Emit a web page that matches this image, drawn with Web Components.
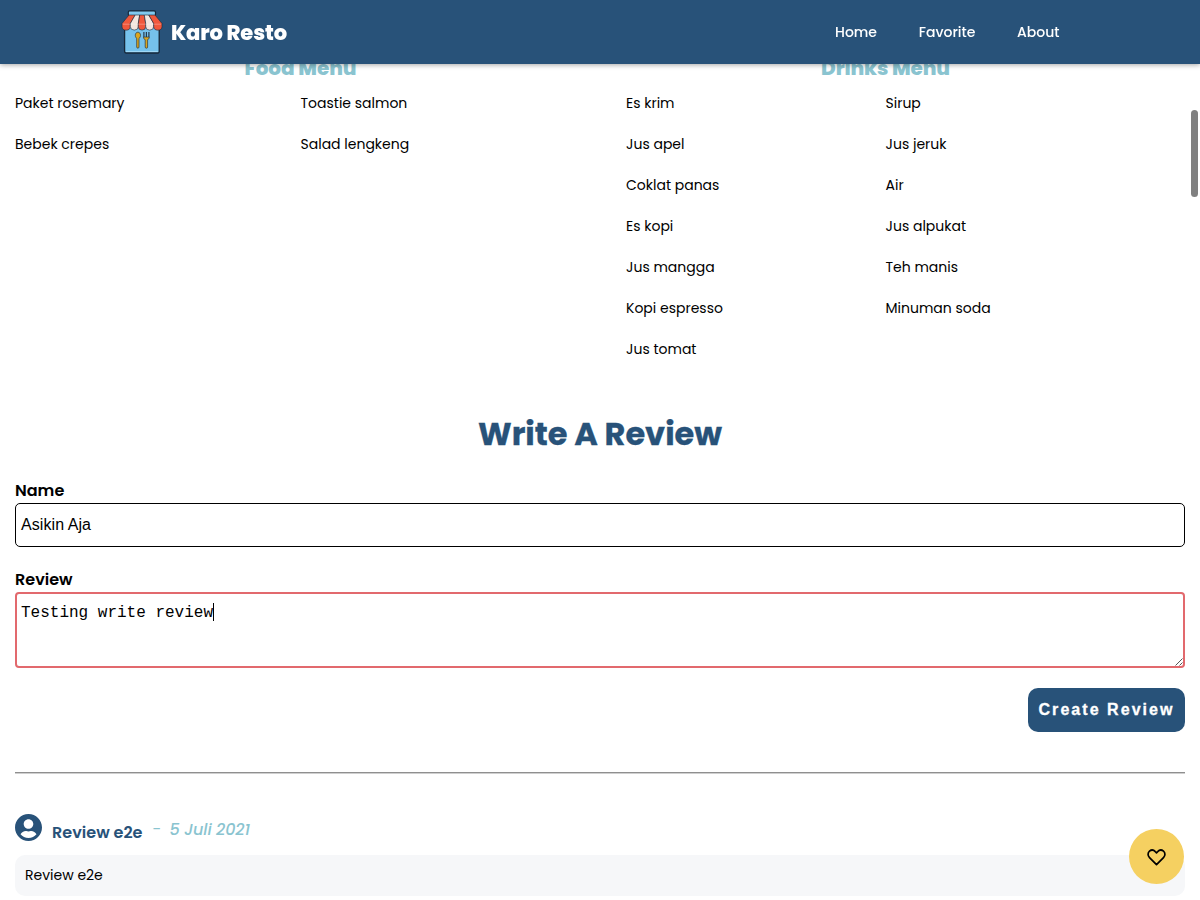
<!DOCTYPE html>
<html lang="en">
<head>
<meta charset="utf-8">
<title>Karo Resto</title>
<style>
html,body{margin:0;height:900px;overflow:hidden;background:#fff}
body{font-family:Poppins,Inter,"Open Sans",sans-serif;color:#000;--navy:#285279;--teal:#8ac4d0}
</style>
</head>
<body>
<resto-app></resto-app>
<script>
const define = (name, html, setup) => customElements.define(name, class extends HTMLElement {
  connectedCallback() {
    if (this.shadowRoot) return;
    const root = this.attachShadow({mode: 'open'});
    const t = document.createElement('template');
    t.innerHTML = html;
    if (setup) setup(this, root, t);
    root.appendChild(t.content.cloneNode(true));
  }
});

/* A line of text tracked so that it takes up the given width. */
customElements.define('fit-text', class extends HTMLElement {
  connectedCallback() {
    if (this.shadowRoot) return;
    const root = this.attachShadow({mode: 'open'});
    root.innerHTML = '<style>:host{display:inline-block;white-space:nowrap}</style><slot></slot>';
    requestAnimationFrame(() => this.fit());
    this.fit();
  }
  fit() {
    const w = parseFloat(this.getAttribute('w'));
    this.style.width = 'auto';
    this.style.letterSpacing = '0px';
    const natural = this.getBoundingClientRect().width;
    const n = this.textContent.length;
    if (natural && n > 1) this.style.letterSpacing = ((w - natural) / (n - 1)).toFixed(4) + 'px';
    this.style.width = w + 'px';
  }
});

define('resto-logo', `
<style>:host{display:block;width:42px;height:46px}svg{display:block}</style>
<svg width="42" height="46" viewBox="0 0 42 46">
  <path d="M3.600 15h34.600v27.600a1.400 1.400 0 0 1-1.400 1.400H5a1.400 1.400 0 0 1-1.400-1.400z" fill="#76c2ec" stroke="#17283a" stroke-width="1.300"/>
  <path d="M5 42.500h31.800" stroke="#a5daf6" stroke-width=".9"/>
  <rect x="7.300" y="1.900" width="27.200" height="5" rx="1.400" fill="#80c9ef" stroke="#17283a" stroke-width="1.200"/>
  <g stroke="#17283a" stroke-opacity=".75" stroke-width=".8">
    <path d="M8 6h6.200L9.300 14.500v3a4.100 3.600 0 0 1-8.300 0v-3z" fill="#f0583c"/>
    <path d="M14.200 6h4.500l-1.400 8.500v3a4 3.600 0 0 1-8 0v-3z" fill="#f3e6df"/>
    <path d="M18.700 6h4.600l1.400 8.500v3a3.700 3.600 0 0 1-7.400 0v-3z" fill="#f0583c"/>
    <path d="M23.300 6h4.500l4.900 8.500v3a4 3.600 0 0 1-8 0v-3z" fill="#f3e6df"/>
    <path d="M27.800 6H34l7 8.500v3a4.100 3.600 0 0 1-8.300 0v-3z" fill="#f0583c"/>
  </g>
  <path d="M1.800 15.200h38.300" stroke="#fff" stroke-opacity=".3" stroke-width="1"/>
  <g stroke="#283742" stroke-width=".7" fill="#dba51e">
    <path d="M16.900 23.200c1.700 0 2.600 1.400 2.600 3.100 0 1.500-.7 2.600-1.500 3v8.700a1.150 1.150 0 0 1-2.300 0v-8.700c-.8-.4-1.400-1.500-1.400-3 0-1.700.9-3.100 2.600-3.100z"/>
    <path d="M22.500 28h5.800c0 1.700-.8 2.300-1.700 2.600V38a1.200 1.200 0 0 1-2.400 0v-7.400c-1-.3-1.700-.9-1.700-2.600z"/>
  </g>
  <path d="M22.900 23v5M25.400 23v5M27.900 23v5" stroke="#263b4d" stroke-width="1.200"/>
</svg>`);

define('app-bar', `
<style>
:host{display:flex;position:fixed;inset:0 0 auto 0;height:64px;box-sizing:border-box;padding:0 140.500px 0 121px;align-items:center;justify-content:space-between;background:var(--navy);color:#fff;box-shadow:0 1px 5px rgba(0,0,0,.35);z-index:5}
.brand{display:flex;align-items:center;gap:8px;font-weight:800;font-size:21px;line-height:30px}
.brand fit-text{margin-top:1px}
nav{display:flex;gap:41.700px;font-size:14px;font-weight:500;line-height:21px}
</style>
<div class="brand"><resto-logo></resto-logo><fit-text w="116">Karo Resto</fit-text></div>
<nav><span>Home</span><span>Favorite</span><span>About</span></nav>`);

define('menu-list', `
<style>
:host{display:block}
h2{margin:-1px 0 12px;height:26px;line-height:26px;text-align:center;color:var(--teal);font-size:20px;font-weight:800}
.items{display:grid;grid-template-columns:1fr 1fr;grid-auto-rows:41px;font-size:14px;line-height:21px}
</style>
<h2></h2><div class="items"></div>`, (host, root, t) => {
  t.content.querySelector('h2').innerHTML = `<fit-text w="${host.getAttribute('w')}">${host.getAttribute('title-text')}</fit-text>`;
  t.content.querySelector('.items').innerHTML = host.getAttribute('items').split(',').map(s => `<div>${s}</div>`).join('');
});

define('form-field', `
<style>
:host{display:block}
.label{height:24px;line-height:26px;font-size:16px;font-weight:600}
.box{position:relative;box-sizing:border-box;height:44px;margin-top:1px;border:1px solid #000;border-radius:5px;padding:0 5px;font:16px/42px "Liberation Sans",Arial,sans-serif}
:host([multiline]) .box{height:76px;border:2px solid #e2696d;border-radius:4px;padding:9px 4px;font:16px/20px "Liberation Mono","Courier New",monospace}
.value{display:inline-block;height:18px}
:host(:not([multiline])) svg{display:none}
:host([multiline]) .value{border-right:1px solid #000}
svg{position:absolute;right:0;bottom:0}
</style>
<div class="label"><slot name="label"></slot></div>
<div class="box" role="textbox"><span class="value"><slot></slot></span>
<svg width="8" height="8"><path d="M.5 7.500l7-7M4.500 7.500l3-3" stroke="#555" fill="none"/></svg></div>`);

define('primary-button', `
<style>
:host{display:block}
button{display:block;box-sizing:border-box;width:157px;height:44px;margin:0 0 0 auto;padding:0 2px 1px 0;border:0;border-radius:10px;background:var(--navy);color:#fff;font:bold 16px "Liberation Sans",Arial,sans-serif;-webkit-text-stroke:.3px #fff}
</style>
<button><slot></slot></button>`);

define('review-card', `
<style>
:host{display:block}
header{display:flex;height:41px}
.avatar{display:block;width:27px;height:27px}
.name{margin:7px 0 0 10px;font-size:16px;line-height:24px;font-weight:600;color:var(--navy)}
.dash,.date{margin:4px 0 0 10px;font-size:16px;line-height:24px;color:var(--teal)}
.date{font-style:italic;font-weight:500}
.text{box-sizing:border-box;height:41px;padding:10px;border-radius:10px;background:#f6f7f9;font-size:14px;line-height:21px}
</style>
<header>
<svg class="avatar" viewBox="0 8 496 496"><path fill="#285279" d="M248 8C111 8 0 119 0 256s111 248 248 248 248-111 248-248S385 8 248 8zm0 96c48.600 0 88 39.400 88 88s-39.400 88-88 88-88-39.400-88-88 39.400-88 88-88zm0 344c-58.700 0-111.300-26.600-146.500-68.200 18.800-35.400 55.600-59.800 98.500-59.800 2.400 0 4.800.4 7.100 1.100 13 4.200 26.600 6.900 40.900 6.900 14.300 0 28-2.700 40.900-6.900 2.300-.7 4.700-1.100 7.100-1.100 42.900 0 79.700 24.400 98.500 59.800C359.300 421.400 306.700 448 248 448z"/></svg>
<div class="name"><slot name="name"></slot></div><div class="dash"><fit-text w="7">-</fit-text></div><div class="date"><slot name="date"></slot></div>
</header>
<div class="text"><slot></slot></div>`);

define('like-button', `
<style>
:host{position:fixed;right:16px;top:829px;width:55px;height:55px;border-radius:50%;background:#f5d061;display:flex;align-items:center;justify-content:center;z-index:3}
svg{margin-top:1px}
</style>
<svg width="19" height="17" viewBox="0.500 0.500 19 17"><path d="M10 16.200 3 9.200C1.100 7.300 1.100 4.200 3 2.600c1.900-1.500 4.300-1.100 5.800.5L10 4.300l1.200-1.200c1.500-1.600 3.900-2 5.800-.5 1.900 1.600 1.900 4.700 0 6.600z" fill="none" stroke="#000" stroke-width="1.700" stroke-linejoin="round"/></svg>`);

define('scroll-thumb', `<style>:host{position:fixed;right:2px;top:110px;width:7px;height:87px;border-radius:4px;background:#808080;z-index:4}</style>`);

define('resto-app', `
<style>
:host{display:block}
main{display:flex;flex-direction:column;padding:56px 15px 0}
.menus{display:grid;grid-template-columns:571px 519px;gap:40px;height:324px}
h1{margin:30px 0 0;height:48px;line-height:48px;text-align:center;color:var(--navy);font-size:32px;font-weight:700;-webkit-text-stroke:.3px var(--navy)}
form-field{margin-top:20px}
primary-button{margin-top:20px}
hr{width:100%;box-sizing:border-box;margin:40px 0;height:2px;border:0;border-top:1px solid #8f8f8f;border-bottom:1px solid #cfcfcf}
</style>
<app-bar></app-bar>
<main>
<div class="menus">
<menu-list title-text="Food Menu" w="112" items="Paket rosemary,Toastie salmon,Bebek crepes,Salad lengkeng"></menu-list>
<menu-list title-text="Drinks Menu" w="129" items="Es krim,Sirup,Jus apel,Jus jeruk,Coklat panas,Air,Es kopi,Jus alpukat,Jus mangga,Teh manis,Kopi espresso,Minuman soda,Jus tomat"></menu-list>
</div>
<h1><fit-text w="244">Write A Review</fit-text></h1>
<form-field><span slot="label">Name</span><fit-text w="70">Asikin Aja</fit-text></form-field>
<form-field multiline><span slot="label">Review</span><fit-text w="192">Testing write review</fit-text></form-field>
<primary-button><fit-text w="134">Create Review</fit-text></primary-button>
<hr>
<review-card><fit-text slot="name" w="90.500">Review e2e</fit-text><fit-text slot="date" w="80.500">5 Juli 2021</fit-text>Review e2e</review-card>
</main>
<like-button></like-button>
<scroll-thumb></scroll-thumb>`);
</script>
</body>
</html>
